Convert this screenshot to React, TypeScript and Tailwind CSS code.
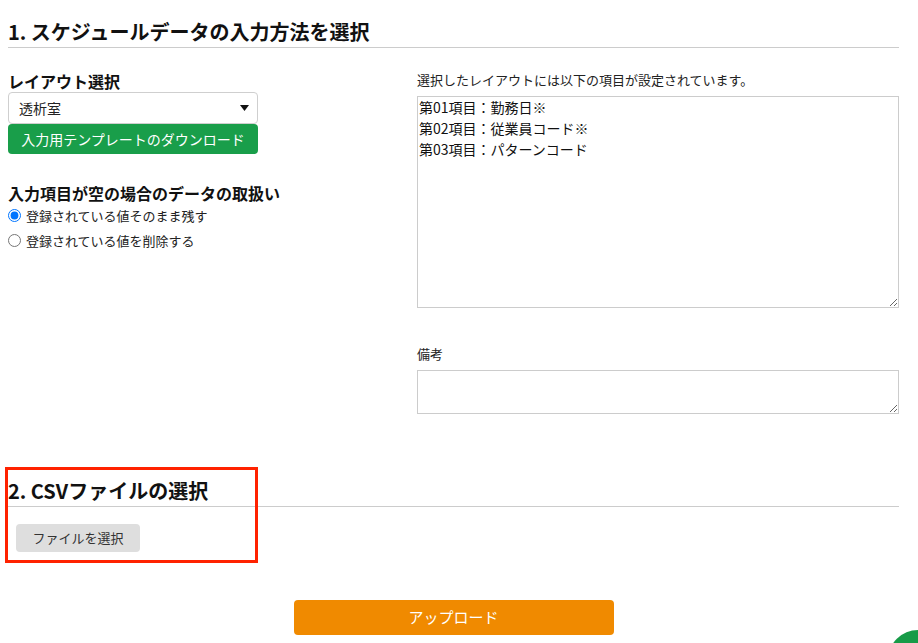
import React from "react";

const font = { fontFamily: '"Noto Sans CJK JP", "Noto Sans", sans-serif' };

export default function App() {
    return (
        <div className="relative min-h-[643px] bg-white text-[#111] overflow-hidden" style={font}>
            <div className="ml-2 w-[891px]">
                <h2 className="mt-[17px] leading-[30px] text-[20px] font-bold border-b border-[#cccccc]">
                    1. スケジュールデータの入力方法を選択
                </h2>

                <div className="flex">
                    {/* left column */}
                    <div className="w-[409px]">
                        <div className="mt-[23px] leading-[20px] text-[16px] font-bold">レイアウト選択</div>
                        <div className="relative mt-px w-[250px]">
                            <select
                                className="appearance-none w-full h-[32px] border border-[#cfcfcf] rounded-[4px] bg-white pl-[10px] text-[14px] text-[#222] outline-none"
                                defaultValue="透析室"
                            >
                                <option>透析室</option>
                            </select>
                            <svg className="absolute right-[9px] top-[13px] pointer-events-none" width="9" height="6" viewBox="0 0 9 6">
                                <path d="M0 0h9L4.5 6z" fill="#111" />
                            </svg>
                        </div>
                        <button className="block w-[250px] h-[30px] rounded-[4px] bg-[#199e4a] text-white text-[14px] leading-[30px]">
                            入力用テンプレートのダウンロード
                        </button>

                        <div className="mt-[29px] leading-[20px] text-[16px] font-bold">入力項目が空の場合のデータの取扱い</div>
                        <label className="flex items-center h-[25px] text-[13px] text-[#222]">
                            <input type="radio" name="empty" defaultChecked className="m-0 w-[13px] h-[13px]" />
                            <span className="ml-[5px]">登録されている値そのまま残す</span>
                        </label>
                        <label className="flex items-center h-[25px] text-[13px] text-[#222]">
                            <input type="radio" name="empty" className="m-0 w-[13px] h-[13px]" />
                            <span className="ml-[5px]">登録されている値を削除する</span>
                        </label>
                    </div>

                    {/* right column */}
                    <div className="w-[482px]">
                        <div className="mt-[23px] leading-[18px] text-[13px] text-[#222]">選択したレイアウトには以下の項目が設定されています。</div>
                        <textarea
                            readOnly
                            className="block mt-[7px] w-full h-[212px] border border-[#cccccc] px-px py-0 text-[14px] leading-[21px] text-[#111] outline-none"
                            defaultValue={"第01項目：勤務日※\n第02項目：従業員コード※\n第03項目：パターンコード"}
                        />
                        <div className="mt-[37px] leading-[18px] text-[13px] text-[#222]">備考</div>
                        <textarea className="block mt-[7px] w-full h-[44px] border border-[#cccccc] px-px py-0 text-[14px] outline-none" />
                    </div>
                </div>

                <div className="relative">
                    <h2 className="mt-[62px] leading-[30px] text-[20px] font-bold border-b border-[#cccccc]">
                        2. CSVファイルの選択
                    </h2>
                    <button className="block ml-2 mt-[17px] h-[28px] w-[124px] rounded-[4px] bg-[#dedede] text-[13px] text-[#333]">
                        ファイルを選択
                    </button>
                    <div className="absolute left-[-3px] top-[-9px] w-[253px] h-[96px] border-[3px] border-[#ff2200] pointer-events-none" />
                </div>

                <div className="flex justify-center mt-[48px]">
                    <button className="w-[320px] h-[35px] rounded-[4px] bg-[#f08a00] text-white text-[15px]">
                        アップロード
                    </button>
                </div>
            </div>

            <div className="absolute left-[888px] top-[630px] w-[60px] h-[60px] rounded-full bg-[#179b48]" />
        </div>
    );
}
